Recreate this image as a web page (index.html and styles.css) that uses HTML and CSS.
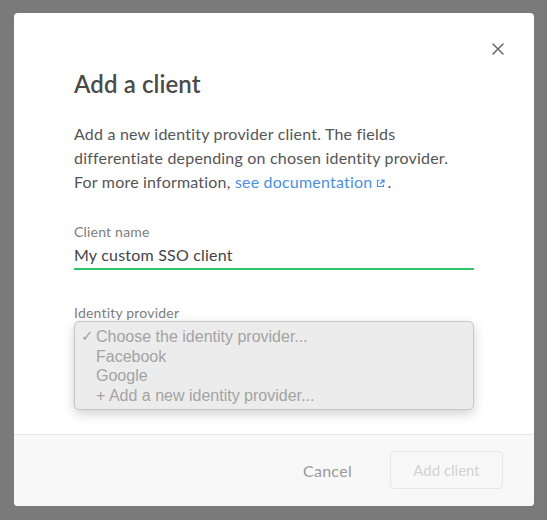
FILE: index.html
```html
<!DOCTYPE html>
<html lang="en">
<head>
<meta charset="utf-8">
<title>Add a client</title>
<link rel="stylesheet" href="styles.css">
</head>
<body>
<div class="backdrop">
  <div class="modal">
    <button class="close" aria-label="Close">
      <svg width="12" height="12" viewBox="0 0 12 12"><path d="M1 1L11 11M11 1L1 11" stroke="#6b6b6b" stroke-width="1.6" stroke-linecap="round"/></svg>
    </button>
    <div class="modal-body">
      <h1 class="title">Add a client</h1>
      <p class="intro">Add a new identity provider client. The fields differentiate depending on chosen identity provider. For more information, <a class="doc-link" href="#">see documentation</a><svg class="ext" width="9" height="9" viewBox="0 0 9 9"><path d="M3.5 1.5H1.5V7.5H7.5V5.5" fill="none" stroke="#4a90e2" stroke-width="1.2"/><path d="M5 1H8V4M8 1L4 5" fill="none" stroke="#4a90e2" stroke-width="1.2"/></svg><span class="stop">.</span></p>

      <div class="field">
        <label class="field-label">Client name</label>
        <div class="text-input">My custom SSO client</div>
      </div>

      <div class="field field-select">
        <label class="field-label">Identity provider</label>
        <ul class="options">
          <li class="option"><span class="check">✓</span>Choose the identity provider...</li>
          <li class="option"><span class="check"></span>Facebook</li>
          <li class="option"><span class="check"></span>Google</li>
          <li class="option"><span class="check"></span>+ Add a new identity provider...</li>
        </ul>
      </div>
    </div>
    <div class="modal-footer">
      <button class="btn-cancel">Cancel</button>
      <button class="btn-primary" disabled>Add client</button>
    </div>
  </div>
</div>
</body>
</html>
```

FILE: styles.css
```css
* { box-sizing: border-box; }

html, body {
  margin: 0;
  padding: 0;
  height: 100%;
}

body {
  background: #7a7a7a;
  font-family: Lato, "Open Sans", sans-serif;
}

.backdrop {
  padding: 13px 13px 0 14px;
}

.modal {
  position: relative;
  width: 520px;
  height: 493px;
  background: #fff;
  border-radius: 4px;
  overflow: hidden;
  display: flex;
  flex-direction: column;
}

.close {
  position: absolute;
  top: 30px;
  right: 30px;
  width: 12px;
  height: 12px;
  padding: 0;
  border: 0;
  background: none;
  display: flex;
}

.modal-body {
  flex: 1;
  padding: 56px 60px 0 60px;
}

.title {
  margin: 0;
  font-size: 24px;
  line-height: 30px;
  font-weight: 600;
  color: #4a4a4a;
  letter-spacing: 0.1px;
}

.intro {
  margin: 23px 0 0;
  font-size: 16px;
  line-height: 24px;
  letter-spacing: 0.2px;
  color: #555;
}

.doc-link {
  color: #4a90e2;
  text-decoration: none;
}

.ext {
  margin: 0 2px 0 4px;
  vertical-align: 0;
}

.field {
  margin-top: 29px;
}

.field-label {
  display: block;
  font-size: 14px;
  line-height: 18px;
  letter-spacing: 0.2px;
  color: #7d7d7d;
}

.text-input {
  margin-top: 3px;
  font-size: 16px;
  line-height: 22px;
  letter-spacing: 0.2px;
  color: #444;
  padding-bottom: 2px;
  border-bottom: 2px solid #2ec46a;
}

.field-select {
  margin-top: 34px;
}

.options {
  list-style: none;
  margin: -1px 0 0;
  padding: 5px 0 4px;
  background: #ececec;
  border: 1px solid #c6c6c6;
  border-radius: 5px;
  box-shadow: 0 4px 12px rgba(0, 0, 0, 0.18);
  font-family: "Liberation Sans", Arial, sans-serif;
  font-size: 16px;
  color: #a3a3a3;
}

.option {
  display: flex;
  line-height: 19.5px;
  padding-left: 6px;
}

.check {
  width: 15px;
  font-family: "DejaVu Sans", sans-serif;
  font-size: 15px;
}

.modal-footer {
  height: 72px;
  background: #f8f8f9;
  border-top: 1px solid #e8e8e8;
  display: flex;
  align-items: center;
  justify-content: flex-end;
  padding: 0 31px 1px 0;
  gap: 38px;
}

.btn-cancel {
  border: 0;
  background: none;
  padding: 0;
  font-family: Lato, sans-serif;
  font-size: 16px;
  letter-spacing: 0.3px;
  color: #9a9a9a;
}

.btn-primary {
  width: 113px;
  height: 38px;
  border: 1px solid #e6e6e6;
  border-radius: 4px;
  background: #f8f8f9;
  font-family: Lato, sans-serif;
  font-size: 15px;
  color: #d2d2d2;
}
```
